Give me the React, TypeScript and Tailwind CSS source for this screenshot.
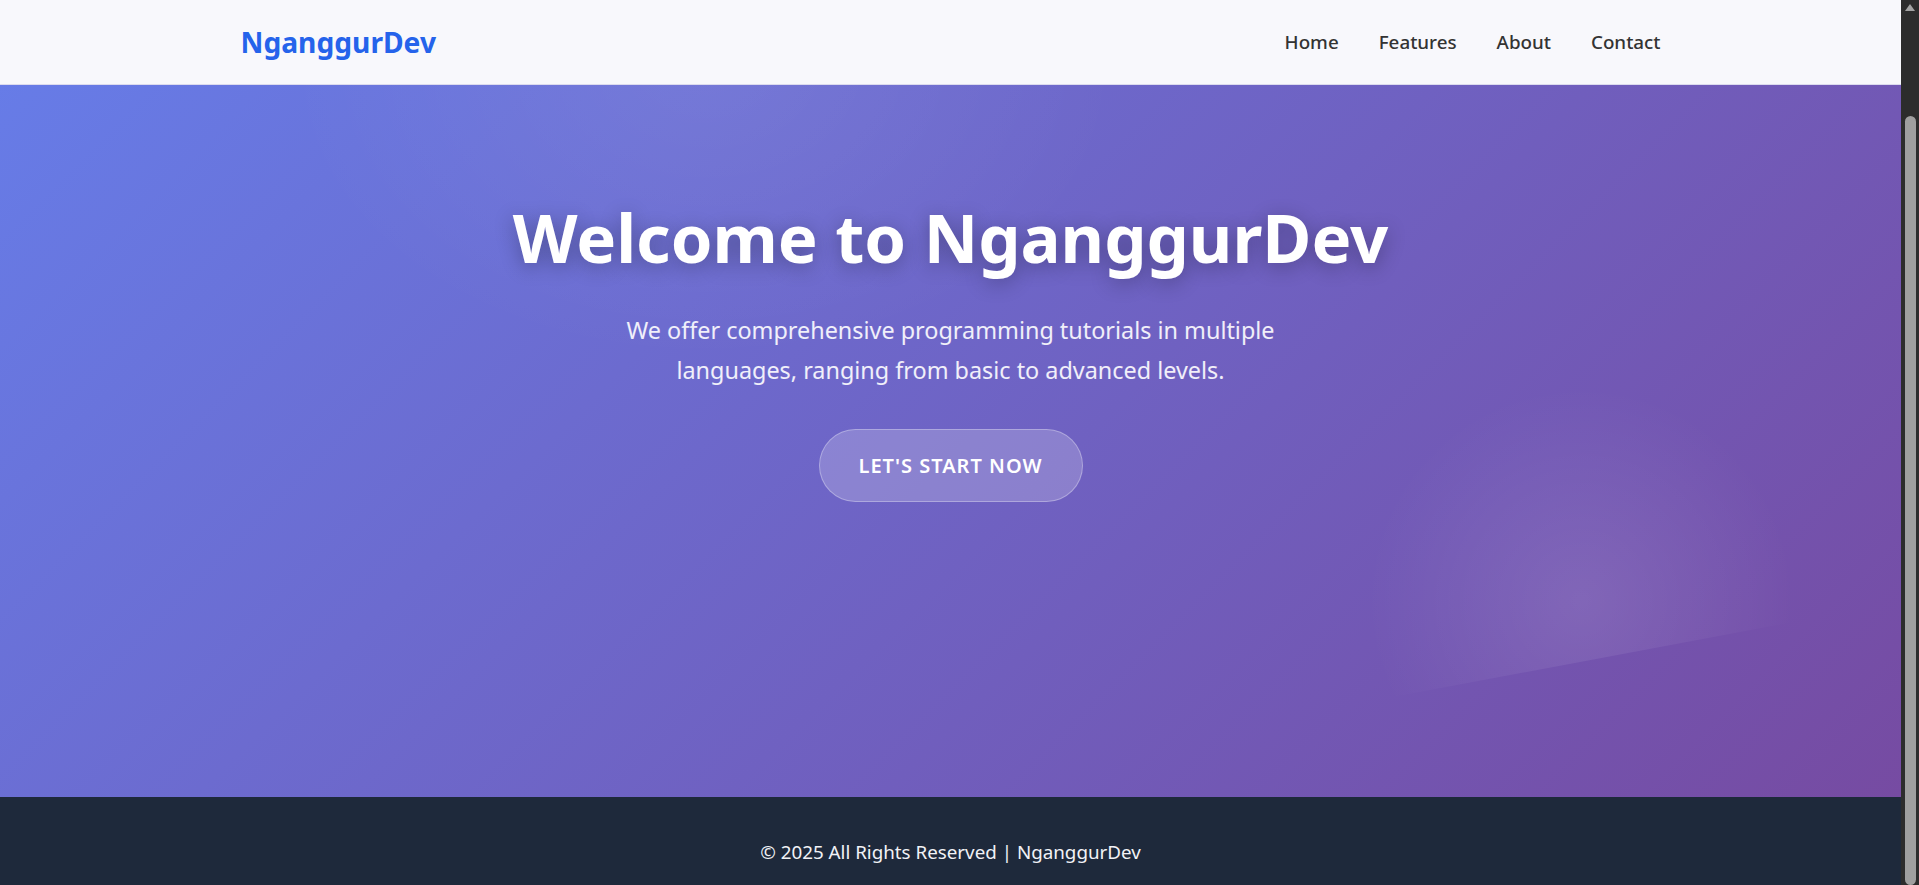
import React from 'react'

const font = { fontFamily: '"Segoe UI", "Noto Sans", "Open Sans", sans-serif' }

const links = ['Home', 'Features', 'About', 'Contact']

function Header() {
  return (
    <header className="sticky top-0 z-20 h-[85px] bg-[#f8f8fc] border-b border-[#dcdbee]">
      <div className="mx-auto flex h-full w-[1420px] items-center justify-between">
        <a href="#" className="text-[28.2px] font-bold text-[#2563eb]">
          NganggurDev
        </a>
        <nav className="flex items-center gap-[40px]">
          {links.map((l) => (
            <a key={l} href="#" className="text-[18.8px] font-medium text-[#333333]">
              {l}
            </a>
          ))}
        </nav>
      </div>
    </header>
  )
}

function Hero() {
  return (
    <section className="relative h-[828px] overflow-hidden bg-[linear-gradient(135deg,#667eea_0%,#764ba2_100%)]">
      {/* soft light near the top */}
      <div className="pointer-events-none absolute inset-0 bg-[radial-gradient(ellipse_600px_420px_at_37%_12%,rgba(255,255,255,0.07),transparent_70%)]" />
      {/* tilted glow bottom right */}
      <div className="pointer-events-none absolute left-[1196px] top-[195px] h-[500px] w-[700px] -rotate-[10.6deg] bg-[radial-gradient(circle_215px_at_50%_calc(100%-60px),rgba(255,255,255,0.1),transparent_100%)]" />

      <div className="relative flex flex-col items-center pt-[228px] text-center">
        <h1 className="text-[67px] font-bold leading-[1.2] text-white [text-shadow:0_4px_20px_rgba(0,0,0,0.3)]">
          Welcome to NganggurDev
        </h1>
        <p className="mt-[33px] max-w-[700px] text-[23.4px] leading-[40px] text-white/90">
          We offer comprehensive programming tutorials in multiple languages, ranging from basic to advanced levels.
        </p>
        <a
          href="#"
          className="mt-[39px] flex h-[73px] w-[264px] items-center justify-center rounded-full border border-white/30 bg-white/20 text-[20px] font-semibold uppercase tracking-[1px] text-white"
        >
          Let's Start Now
        </a>
      </div>
    </section>
  )
}

function Footer() {
  return (
    <footer className="h-[88px] bg-[#1e293b] pt-[43px] text-center">
      <p className="text-[18.8px] leading-[24px] text-[#f1f2f6]">© 2025 All Rights Reserved | NganggurDev</p>
    </footer>
  )
}

function Scrollbar() {
  return (
    <div className="flex h-screen w-[18px] shrink-0 flex-col items-center bg-[#2c2c2c]">
      <svg className="mt-[3px] h-[9px] w-[12px]" viewBox="0 0 12 9">
        <path d="M6 1 L11 8 L1 8 Z" fill="#a3a3a3" />
      </svg>
      <div className="mt-[104px] w-[11px] flex-1 rounded-full bg-[#9f9f9f]" />
    </div>
  )
}

export default function App() {
  return (
    <div className="flex h-screen" style={font}>
      <div className="flex h-screen min-w-0 flex-1 flex-col-reverse overflow-y-scroll bg-[#1e293b]">
        <div>
          <Header />
          <Hero />
          <Footer />
        </div>
      </div>
      <Scrollbar />
    </div>
  )
}
